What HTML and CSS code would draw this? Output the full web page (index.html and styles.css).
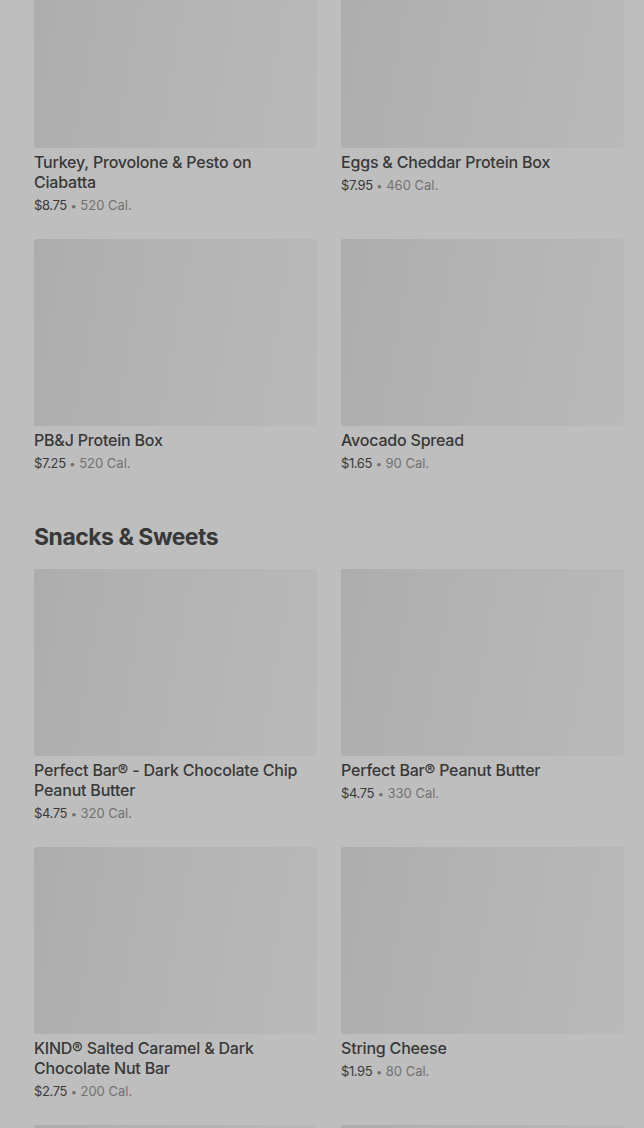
FILE: index.html
```html
<!DOCTYPE html>
<html lang="en">
<head>
  <meta charset="UTF-8" />
  <title>Menu</title>
  <link rel="stylesheet" href="styles.css">
</head>
<body>

  <div class="menu">
    <section class="section first">
      <div class="grid">
        <div class="item">
          <div class="thumb"></div>
          <div class="name">Turkey, Provolone &amp; Pesto on Ciabatta</div>
          <div class="meta"><span class="price">$8.75</span> <span class="dot">•</span> <span class="cal">520 Cal.</span></div>
        </div>
        <div class="item">
          <div class="thumb"></div>
          <div class="name">Eggs &amp; Cheddar Protein Box</div>
          <div class="meta"><span class="price">$7.95</span> <span class="dot">•</span> <span class="cal">460 Cal.</span></div>
        </div>
        <div class="item">
          <div class="thumb"></div>
          <div class="name">PB&amp;J Protein Box</div>
          <div class="meta"><span class="price">$7.25</span> <span class="dot">•</span> <span class="cal">520 Cal.</span></div>
        </div>
        <div class="item">
          <div class="thumb"></div>
          <div class="name">Avocado Spread</div>
          <div class="meta"><span class="price">$1.65</span> <span class="dot">•</span> <span class="cal">90 Cal.</span></div>
        </div>
      </div>
    </section>

    <section class="section">
      <h2>Snacks &amp; Sweets</h2>
      <div class="grid">
        <div class="item">
          <div class="thumb"></div>
          <div class="name">Perfect Bar® - Dark Chocolate Chip Peanut Butter</div>
          <div class="meta"><span class="price">$4.75</span> <span class="dot">•</span> <span class="cal">320 Cal.</span></div>
        </div>
        <div class="item">
          <div class="thumb"></div>
          <div class="name">Perfect Bar® Peanut Butter</div>
          <div class="meta"><span class="price">$4.75</span> <span class="dot">•</span> <span class="cal">330 Cal.</span></div>
        </div>
        <div class="item">
          <div class="thumb"></div>
          <div class="name">KIND® Salted Caramel &amp; Dark Chocolate Nut Bar</div>
          <div class="meta"><span class="price">$2.75</span> <span class="dot">•</span> <span class="cal">200 Cal.</span></div>
        </div>
        <div class="item">
          <div class="thumb"></div>
          <div class="name">String Cheese</div>
          <div class="meta"><span class="price">$1.95</span> <span class="dot">•</span> <span class="cal">80 Cal.</span></div>
        </div>
        <div class="item">
          <div class="thumb"></div>
        </div>
        <div class="item">
          <div class="thumb"></div>
        </div>
      </div>
    </section>
  </div>

</body>
</html>
```

FILE: styles.css
```css
body {
  margin: 0;
  background-color: #bebebe;
  font-family: Inter, 'Noto Sans', sans-serif;
  color: #333;
  height: 1128px;
  overflow: hidden;
}

.menu {
  padding: 0 20px 0 34px;
  margin-top: -39px;
}

.section h2 {
  margin: 48px 0 16px;
  font-size: 23px;
  line-height: 32px;
  font-weight: 700;
  letter-spacing: -0.5px;
  color: #383838;
}

.grid {
  display: grid;
  grid-template-columns: 1fr 1fr;
  column-gap: 24px;
  row-gap: 24px;
}

.thumb {
  height: 187px;
  border-radius: 2px;
  background: linear-gradient(100deg, #adadad 0%, #b3b3b3 45%, #b9b9b9 100%);
}

.name {
  margin-top: 4px;
  font-size: 16px;
  line-height: 20px;
  font-weight: 500;
  letter-spacing: -0.2px;
  color: #383838;
}

.meta {
  margin-top: 3px;
  font-size: 13px;
  line-height: 20px;
  height: 20px;
}

.price {
  color: #3a3a3a;
  letter-spacing: -0.4px;
}

.dot {
  color: #707070;
  font-size: 11px;
  line-height: 0;
}

.cal {
  color: #727272;
}
```
